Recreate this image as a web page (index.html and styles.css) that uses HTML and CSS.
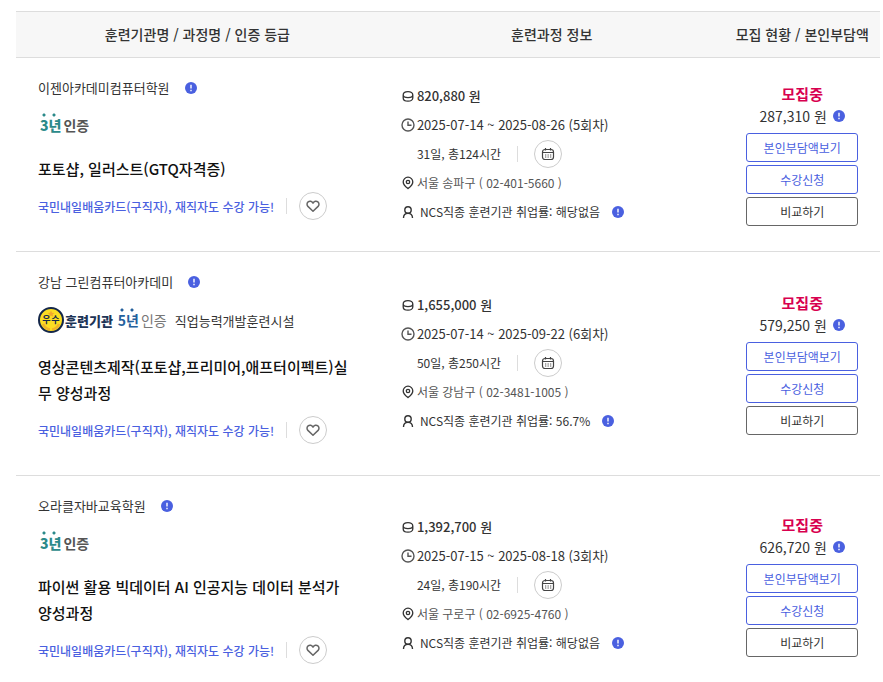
FILE: index.html
```html
<!DOCTYPE html>
<html lang="ko">
<head>
  <meta charset="UTF-8">
  <title>훈련과정 목록</title>
  <link rel="stylesheet" href="styles.css">
</head>
<body>
  <svg class="sprite" aria-hidden="true">
    <symbol id="ico-info" viewBox="0 0 12 12">
      <circle cx="6" cy="6" r="6" fill="#4a60e0"/>
      <path d="M6 2.800v3.800M6 7.800v1.400" stroke="#fff" stroke-width="1.4" fill="none"/>
    </symbol>
    <symbol id="ico-heart" viewBox="0 0 14 14">
      <path d="M7 12.300 1.900 7.400C.6 5.900.8 3.900 2.100 2.900 3.700 1.700 5.800 2.200 7 4.100c1.200-1.900 3.300-2.400 4.900-1.200C13.200 3.900 13.400 5.900 12.100 7.400Z" fill="none" stroke="#666" stroke-width="1.500" stroke-linejoin="round"/>
    </symbol>
    <symbol id="ico-coin" viewBox="0 0 14 14">
      <path d="M2.200 6c0-1.900 2-3.300 4.800-3.300s4.800 1.400 4.800 3.300c0 1.700-1.500 2.600-4.800 2.600s-4.800-.9-4.800-2.600Zm0 0v3c0 1.900 2 3.200 4.800 3.200s4.800-1.300 4.800-3.200V6" fill="none" stroke="#333" stroke-width="1.300"/>
    </symbol>
    <symbol id="ico-clock" viewBox="0 0 14 14">
      <circle cx="7" cy="7" r="6" fill="none" stroke="#555" stroke-width="1.400"/>
      <path d="M7 3.500V7.300h3.500" fill="none" stroke="#555" stroke-width="1.400"/>
    </symbol>
    <symbol id="ico-pin" viewBox="0 0 14 14">
      <path d="M7 12.600C4 10.300 2.200 8.400 2.200 6a4.800 4.800 0 0 1 9.600 0c0 2.400-1.800 4.300-4.800 6.600Z" fill="none" stroke="#333" stroke-width="1.300"/>
      <circle cx="7" cy="6" r="1.700" fill="none" stroke="#333" stroke-width="1.300"/>
    </symbol>
    <symbol id="ico-person" viewBox="0 0 14 14">
      <circle cx="7" cy="5" r="3.200" fill="none" stroke="#333" stroke-width="1.400"/>
      <path d="M2.500 13c0-3 1.800-4.600 4.500-4.600s4.500 1.600 4.500 4.600" fill="none" stroke="#333" stroke-width="1.400"/>
    </symbol>
    <symbol id="ico-cal" viewBox="0 0 14 14">
      <rect x="1.500" y="2.500" width="11" height="10" rx="2.500" fill="none" stroke="#444" stroke-width="1.200"/>
      <path d="M1.500 5.500h11M4.500 1v2.500M9.500 1v2.500" stroke="#444" stroke-width="1.200" fill="none"/>
      <path d="M4 8h6.500M4 10h6.500" stroke="#555" stroke-dasharray="1.300 1.200" fill="none"/>
    </symbol>
    <symbol id="ico-best" viewBox="0 0 26 26">
      <circle cx="13" cy="13" r="12" fill="#fbdd22" stroke="#14274a" stroke-width="2"/>
      <path d="m13 3.500 1 2.200 2.400.2-1.800 1.500.6 2.300L13 8.500l-2.200 1.200.6-2.300-1.800-1.500 2.400-.2Z" fill="#f3a72e"/>
      <path d="M5 17c1.500 3.500 4 5 7 5.500M21 17c-1.500 3.500-4 5-7 5.500" fill="none" stroke="#f0b429" stroke-width="2.500"/>
      <text x="8.500" y="16" text-anchor="middle" class="best-text">우</text>
      <text x="17.500" y="16" text-anchor="middle" class="best-text">수</text>
    </symbol>
  </svg>

  <table class="course-table">
    <thead>
      <tr>
        <th class="col-name">훈련기관명 / 과정명 / 인증 등급</th>
        <th class="col-info">훈련과정 정보</th>
        <th class="col-state">모집 현황 / 본인부담액</th>
      </tr>
    </thead>
    <tbody>
      <tr>
        <td class="name-cell">
          <div class="org"><a href="#">이젠아카데미컴퓨터학원</a><button class="info" type="button" aria-label="기관 정보"><svg><use href="#ico-info"/></svg></button></div>
          <div class="grade"><span class="cert cert3"><b>3년</b><span>인증</span></span></div>
          <a class="title" href="#">포토샵, 일러스트(GTQ자격증)</a>
          <div class="card"><span class="card-text">국민내일배움카드(구직자), 재직자도 수강 가능!</span><button class="round" type="button" aria-label="관심과정"><svg><use href="#ico-heart"/></svg></button></div>
        </td>
        <td class="info-cell">
          <ul class="info-list">
            <li class="price"><svg><use href="#ico-coin"/></svg>820,880 원</li>
            <li><svg><use href="#ico-clock"/></svg>2025-07-14 ~ 2025-08-26 (5회차)</li>
            <li class="hours"><span class="hours-text">31일, 총124시간</span><button class="round" type="button" aria-label="일정 보기"><svg><use href="#ico-cal"/></svg></button></li>
            <li class="place"><svg><use href="#ico-pin"/></svg>서울 송파구 ( 02-401-5660 )</li>
            <li class="ncs"><svg><use href="#ico-person"/></svg>NCS직종 훈련기관 취업률: 해당없음<button class="info" type="button" aria-label="취업률 정보"><svg><use href="#ico-info"/></svg></button></li>
          </ul>
        </td>
        <td class="state-cell">
          <strong class="state">모집중</strong>
          <div class="pay">287,310 원<button class="info" type="button" aria-label="부담액 정보"><svg><use href="#ico-info"/></svg></button></div>
          <div class="btns">
            <button class="btn" type="button">본인부담액보기</button>
            <button class="btn" type="button">수강신청</button>
            <button class="btn gray" type="button">비교하기</button>
          </div>
        </td>
      </tr>
      <tr>
        <td class="name-cell">
          <div class="org"><a href="#">강남 그린컴퓨터아카데미</a><button class="info" type="button" aria-label="기관 정보"><svg><use href="#ico-info"/></svg></button></div>
          <div class="grade best">
            <span class="best-mark"><svg><use href="#ico-best"/></svg>훈련기관</span>
            <span class="cert cert5"><b>5년</b><span>인증</span></span>
            <span class="facility">직업능력개발훈련시설</span>
          </div>
          <a class="title" href="#">영상콘텐츠제작(포토샵,프리미어,애프터이펙트)실무 양성과정</a>
          <div class="card"><span class="card-text">국민내일배움카드(구직자), 재직자도 수강 가능!</span><button class="round" type="button" aria-label="관심과정"><svg><use href="#ico-heart"/></svg></button></div>
        </td>
        <td class="info-cell">
          <ul class="info-list">
            <li class="price"><svg><use href="#ico-coin"/></svg>1,655,000 원</li>
            <li><svg><use href="#ico-clock"/></svg>2025-07-14 ~ 2025-09-22 (6회차)</li>
            <li class="hours"><span class="hours-text">50일, 총250시간</span><button class="round" type="button" aria-label="일정 보기"><svg><use href="#ico-cal"/></svg></button></li>
            <li class="place"><svg><use href="#ico-pin"/></svg>서울 강남구 ( 02-3481-1005 )</li>
            <li class="ncs"><svg><use href="#ico-person"/></svg>NCS직종 훈련기관 취업률: 56.7%<button class="info" type="button" aria-label="취업률 정보"><svg><use href="#ico-info"/></svg></button></li>
          </ul>
        </td>
        <td class="state-cell">
          <strong class="state">모집중</strong>
          <div class="pay">579,250 원<button class="info" type="button" aria-label="부담액 정보"><svg><use href="#ico-info"/></svg></button></div>
          <div class="btns">
            <button class="btn" type="button">본인부담액보기</button>
            <button class="btn" type="button">수강신청</button>
            <button class="btn gray" type="button">비교하기</button>
          </div>
        </td>
      </tr>
      <tr>
        <td class="name-cell">
          <div class="org"><a href="#">오라클자바교육학원</a><button class="info" type="button" aria-label="기관 정보"><svg><use href="#ico-info"/></svg></button></div>
          <div class="grade"><span class="cert cert3"><b>3년</b><span>인증</span></span></div>
          <a class="title" href="#">파이썬 활용 빅데이터 AI 인공지능 데이터 분석가 양성과정</a>
          <div class="card"><span class="card-text">국민내일배움카드(구직자), 재직자도 수강 가능!</span><button class="round" type="button" aria-label="관심과정"><svg><use href="#ico-heart"/></svg></button></div>
        </td>
        <td class="info-cell">
          <ul class="info-list">
            <li class="price"><svg><use href="#ico-coin"/></svg>1,392,700 원</li>
            <li><svg><use href="#ico-clock"/></svg>2025-07-15 ~ 2025-08-18 (3회차)</li>
            <li class="hours"><span class="hours-text">24일, 총190시간</span><button class="round" type="button" aria-label="일정 보기"><svg><use href="#ico-cal"/></svg></button></li>
            <li class="place"><svg><use href="#ico-pin"/></svg>서울 구로구 ( 02-6925-4760 )</li>
            <li class="ncs"><svg><use href="#ico-person"/></svg>NCS직종 훈련기관 취업률: 해당없음<button class="info" type="button" aria-label="취업률 정보"><svg><use href="#ico-info"/></svg></button></li>
          </ul>
        </td>
        <td class="state-cell">
          <strong class="state">모집중</strong>
          <div class="pay">626,720 원<button class="info" type="button" aria-label="부담액 정보"><svg><use href="#ico-info"/></svg></button></div>
          <div class="btns">
            <button class="btn" type="button">본인부담액보기</button>
            <button class="btn" type="button">수강신청</button>
            <button class="btn gray" type="button">비교하기</button>
          </div>
        </td>
      </tr>
    </tbody>
  </table>
</body>
</html>
```
FILE: styles.css
```css
* {
  box-sizing: border-box;
}
body {
  margin: 0;
  padding: 11px 3px 0 16px;
  background: #fff;
  color: #333;
  font-family: "Noto Sans CJK KR", sans-serif;
  font-size: 13px;
}
a {
  color: inherit;
  text-decoration: none;
}
button {
  font-family: inherit;
  cursor: pointer;
}
.sprite {
  display: none;
}

/* table */
.course-table {
  width: 100%;
  table-layout: fixed;
  border-collapse: collapse;
}
th {
  height: 46px;
  padding: 0 0 2px;
  background: #f7f7f7;
  border-top: 1px solid #ddd;
  border-bottom: 1px solid #ddd;
  font-size: 14px;
  font-weight: 500;
  line-height: 20px;
  white-space: nowrap;
}
.col-name {
  width: 42%;
}
.col-info {
  width: 40%;
}
.col-state {
  width: 18%;
}
td {
  padding: 0 22px;
  border-bottom: 1px solid #ddd;
  vertical-align: middle;
}
td.name-cell {
  padding: 18px 22px 30px;
}
td.info-cell {
  padding-bottom: 2px;
}
td.state-cell {
  text-align: center;
}

/* name column */
.org {
  display: flex;
  align-items: center;
  gap: 15px;
  font-size: 13px;
  line-height: 24px;
}
.grade {
  display: flex;
  align-items: center;
  height: 26px;
  margin: 12px 0 18px;
}
.grade.best {
  height: 28px;
  margin-bottom: 20px;
}
.cert {
  display: flex;
  gap: 2px;
  padding-left: 2px;
  font-size: 14px;
  line-height: 24px;
  white-space: nowrap;
}
.cert b {
  background: radial-gradient(circle at 4px 2px, currentColor 1px, transparent 2px), radial-gradient(circle at 14px 2px, currentColor 1px, transparent 2px);
}
.cert3 {
  color: #555;
  font-weight: 700;
}
.cert3 b {
  color: #2b8a8a;
}
.cert5 {
  margin-left: 3px;
  color: #777;
}
.cert5 b {
  color: #24609c;
}
.best-mark {
  display: flex;
  align-items: center;
  gap: 1px;
  color: #1d3557;
  font-weight: 900;
}
.best-mark svg {
  width: 26px;
  height: 26px;
}
.best-text {
  fill: #14274a;
  font-size: 9px;
  font-weight: 700;
}
.facility {
  margin-left: 8px;
}
.title {
  display: block;
  color: #111;
  font-size: 15px;
  font-weight: 500;
  line-height: 26px;
  word-break: break-all;
}
.card {
  display: flex;
  align-items: center;
  height: 30px;
  margin-top: 9px;
}
.card-text {
  color: #4a60e0;
  font-size: 12px;
  font-weight: 500;
  white-space: nowrap;
}
.card-text,
.hours-text {
  display: flex;
  align-items: center;
}
.card-text::after,
.hours-text::after {
  content: "";
  width: 1px;
  height: 16px;
  margin: 0 12px;
  background: #ddd;
}
.hours-text::after {
  margin: 0 16px;
}

/* icon buttons */
.info {
  display: flex;
  padding: 0;
  border: 0;
  background: none;
}
.info svg {
  width: 12px;
  height: 12px;
}
.round {
  display: flex;
  flex: none;
  align-items: center;
  justify-content: center;
  width: 28px;
  height: 28px;
  padding: 0;
  border: 1px solid #ccc;
  border-radius: 50%;
  background: #fff;
}
.round svg {
  width: 14px;
  height: 14px;
}

/* info column */
.info-list {
  margin: 0;
  padding: 0;
  list-style: none;
}
.info-list li {
  display: flex;
  align-items: center;
  height: 29px;
  white-space: nowrap;
}
.info-list li > svg {
  flex: none;
  width: 14px;
  height: 14px;
  margin-right: 2px;
}
.info-list .price {
  font-weight: 500;
}
.info-list .hours {
  padding-left: 16px;
  font-size: 12px;
}
.info-list .place {
  color: #555;
  font-size: 12px;
}
.info-list .ncs {
  font-size: 12px;
}
.info-list .ncs > svg {
  margin-right: 5px;
}
.ncs .info {
  margin-left: 12px;
}

/* state column */
.state {
  display: block;
  color: #d8004f;
  font-size: 15px;
  font-weight: 700;
  line-height: 22px;
}
.pay {
  display: flex;
  align-items: center;
  justify-content: center;
  gap: 6px;
  font-size: 14px;
  line-height: 22px;
  white-space: nowrap;
}
.btns {
  display: flex;
  flex-direction: column;
  gap: 3px;
  margin-top: 6px;
}
.btn {
  height: 29px;
  padding: 0;
  border: 1px solid #4a60e0;
  border-radius: 3px;
  background: #fff;
  color: #4a60e0;
  font-size: 12px;
  white-space: nowrap;
}
.btn.gray {
  border-color: #666;
  color: #333;
}
```
